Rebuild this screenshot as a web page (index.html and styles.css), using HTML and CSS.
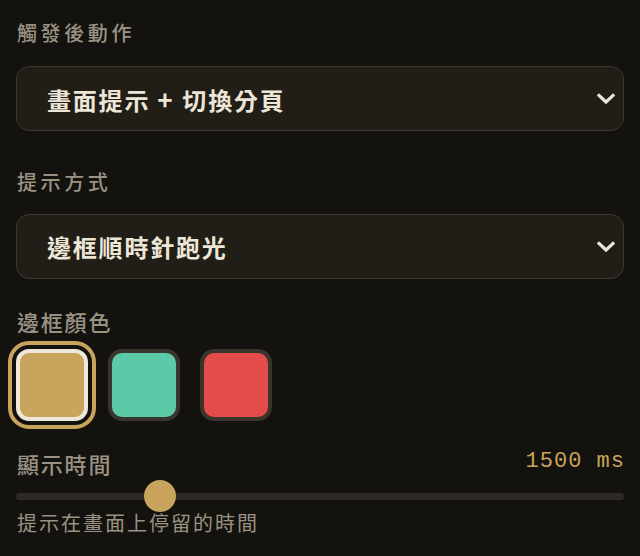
FILE: index.html
```html
<!DOCTYPE html>
<html lang="zh-Hant">
<head>
<meta charset="utf-8">
<link rel="stylesheet" href="styles.css">
</head>
<body>
<div class="panel">
  <div class="field-label first">觸發後動作</div>
  <div class="select">
    <span class="select-text">畫面提示<span class="plus">+</span>切換分頁</span>
    <svg class="chev" width="18" height="12" viewBox="0 0 18 12"><path d="M2 2.5 L9 9 L16 2.5" fill="none" stroke="#ede6d6" stroke-width="3.2" stroke-linecap="square"/></svg>
  </div>

  <div class="field-label second">提示方式</div>
  <div class="select">
    <span class="select-text">邊框順時針跑光</span>
    <svg class="chev" width="18" height="12" viewBox="0 0 18 12"><path d="M2 2.5 L9 9 L16 2.5" fill="none" stroke="#ede6d6" stroke-width="3.2" stroke-linecap="square"/></svg>
  </div>

  <div class="sub-label colors-label">邊框顏色</div>
  <div class="swatches">
    <div class="swatch gold selected"></div>
    <div class="swatch teal"></div>
    <div class="swatch red"></div>
  </div>

  <div class="time-row">
    <div class="sub-label">顯示時間</div>
    <div class="time-value">1500 ms</div>
  </div>
  <input class="slider" type="range" min="500" max="5000" step="100" value="1500">
  <div class="hint">提示在畫面上停留的時間</div>
</div>
</body>
</html>
```

FILE: styles.css
```css
html, body {
  margin: 0;
  padding: 0;
  background: #14120e;
}
body {
  font-family: "Noto Sans CJK TC", "Noto Sans", sans-serif;
  width: 640px;
  height: 556px;
  overflow: hidden;
}
.panel {
  padding: 16px 16px 0 16px;
  display: flex;
  flex-direction: column;
}
.field-label {
  font-size: 20px;
  line-height: 34px;
  letter-spacing: 3.6px;
  color: #9a9384;
  font-weight: 500;
  padding-left: 1px;
}
.field-label.second {
  margin-top: 34px;
}
.select {
  margin-top: 16px;
  height: 63px;
  border: 1px solid #3e382e;
  border-radius: 13px;
  background: #211e18;
  display: flex;
  align-items: center;
  justify-content: space-between;
  padding: 0 8px 0 30px;
}
.field-label.second + .select {
  margin-top: 15px;
}
.select-text {
  font-size: 24px;
  font-weight: 700;
  color: #ede6d6;
  letter-spacing: 1.8px;
}
.plus {
  display: inline-block;
  margin: 0 8px 0 7px;
  font-size: 26px;
  font-weight: 700;
}
.chev {
  display: block;
  margin-top: 1px;
}
.sub-label {
  font-size: 22px;
  line-height: 33px;
  color: #9a9384;
  font-weight: 500;
  letter-spacing: 1.8px;
  padding-left: 1px;
}
.colors-label {
  margin-top: 26px;
}
.swatches {
  margin-top: 11px;
  display: flex;
  gap: 20px;
}
.swatch {
  width: 64px;
  height: 64px;
  border: 4px solid #3a352c;
  border-radius: 14px;
}
.swatch.selected {
  border-color: #efe8da;
  outline: 4px solid #c9a45c;
  outline-offset: 4px;
  border-radius: 13px;
}
.gold { background: #c9a45c; }
.teal { background: #5bcaa8; }
.red { background: #e44b4b; }
.time-row {
  margin-top: 26px;
  display: flex;
  justify-content: space-between;
  align-items: center;
}
.time-value {
  font-family: "Liberation Mono", monospace;
  font-size: 22px;
  letter-spacing: 1px;
  color: #c9a45c;
  margin-top: -5px;
  margin-right: -1px;
}
.slider {
  -webkit-appearance: none;
  appearance: none;
  width: 608px;
  height: 32px;
  margin: 0;
  padding: 0;
  background: transparent;
  display: block;
}
.slider::-webkit-slider-runnable-track {
  height: 7px;
  border-radius: 4px;
  background: #2e2922;
}
.slider::-webkit-slider-thumb {
  -webkit-appearance: none;
  appearance: none;
  width: 32px;
  height: 32px;
  border-radius: 50%;
  background: #c9a45c;
  border: none;
  margin-top: -12.5px;
}
.hint {
  font-size: 20px;
  line-height: 24px;
  color: #9a9384;
  letter-spacing: 2px;
  padding-left: 1px;
  margin-top: -1px;
}
```
